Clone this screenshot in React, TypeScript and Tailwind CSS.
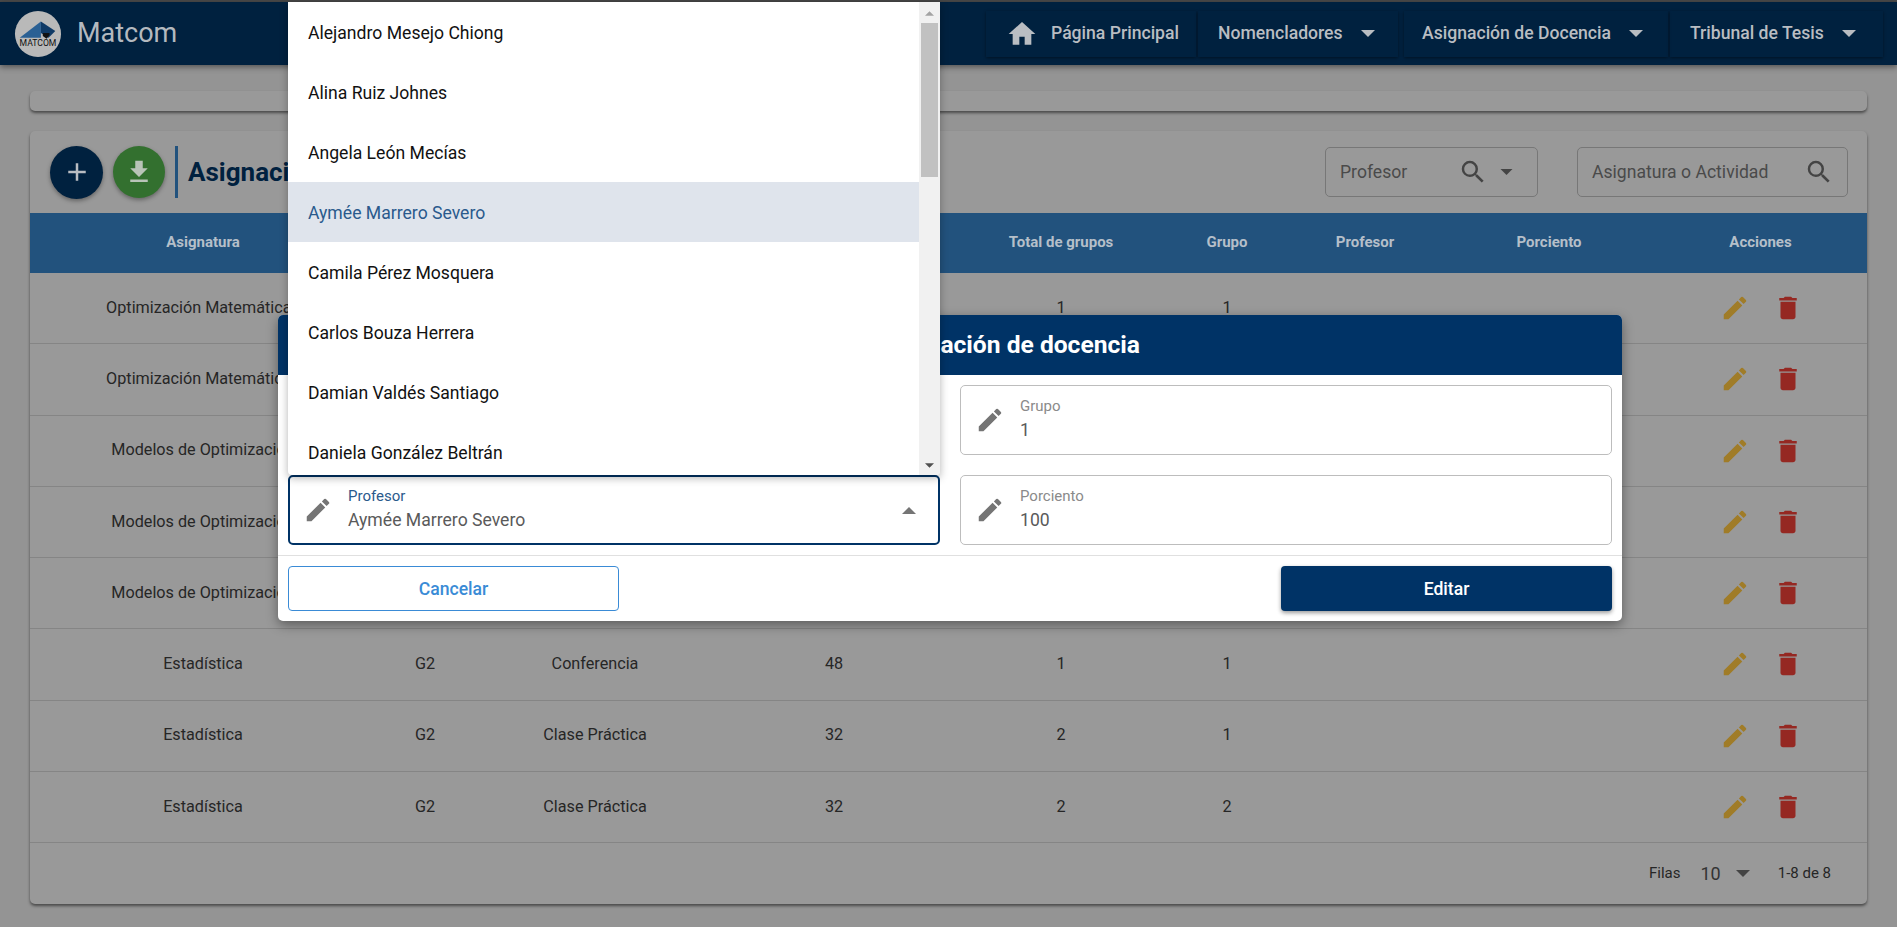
import { MdAdd, MdDelete, MdEdit, MdFileDownload, MdHome, MdSearch } from 'react-icons/md';

const rows = [
  ['Optimización Matemática I', 'G1', 'Conferencia', '48', '1', '1'],
  ['Optimización Matemática I', 'G1', 'Clase Práctica', '32', '1', '1'],
  ['Modelos de Optimización', 'G1', 'Conferencia', '48', '1', '1'],
  ['Modelos de Optimización', 'G1', 'Clase Práctica', '32', '2', '1'],
  ['Modelos de Optimización', 'G1', 'Clase Práctica', '32', '2', '2'],
  ['Estadística', 'G2', 'Conferencia', '48', '1', '1'],
  ['Estadística', 'G2', 'Clase Práctica', '32', '2', '1'],
  ['Estadística', 'G2', 'Clase Práctica', '32', '2', '2'],
];

const headers = ['Asignatura', 'Año', 'Actividad', 'Horas', 'Total de grupos', 'Grupo', 'Profesor', 'Porciento', 'Acciones'];

const professors = [
  'Alejandro Mesejo Chiong',
  'Alina Ruiz Johnes',
  'Angela León Mecías',
  'Aymée Marrero Severo',
  'Camila Pérez Mosquera',
  'Carlos Bouza Herrera',
  'Damian Valdés Santiago',
  'Daniela González Beltrán',
];

const gridCols = 'grid grid-cols-[346px_98px_242px_236px_218px_114px_162px_206px_217px]';

function Caret({ up = false, className = '' }: { up?: boolean; className?: string }) {
  return (
    <svg viewBox="0 0 10 5" className={className} fill="currentColor">
      <path d={up ? 'M0 5L5 0L10 5Z' : 'M0 0L5 5L10 0Z'} />
    </svg>
  );
}

function Logo() {
  return (
    <svg viewBox="0 0 50 50" className="w-[48px] h-[48px] shrink-0">
      <circle cx="25" cy="25" r="24" fill="#b9b9b9" />
      <path d="M6 29L28 12L28 29Z" fill="#2a6094" />
      <path d="M28 12L43 22L36 29L28 24Z" fill="#0f3a66" />
      <path d="M30 24L37 24L37 26L34 30L30 27Z" fill="#111" />
      <text x="25" y="38" textAnchor="middle" fontSize="9" fontFamily="Roboto, sans-serif" fill="#111">MATCOM</text>
    </svg>
  );
}

function Field({ label, value, focused = false }: { label: string; value: string; focused?: boolean }) {
  return (
    <div className={focused ? 'h-[70px] flex items-center rounded-[5px] border-2 border-[#003366]' : 'h-[70px] flex items-center rounded-[5px] border border-[#bdbdbd]'}>
      <MdEdit className={focused ? 'w-[30px] h-[30px] ml-[13px] text-[#757575] shrink-0' : 'w-[30px] h-[30px] ml-[14px] text-[#757575] shrink-0'} />
      <div className="ml-[15px] flex-1">
        <div className={focused ? 'text-[15px] leading-[18px] text-[#2a5a8c]' : 'text-[15px] leading-[18px] text-[#8a8a8a]'}>{label}</div>
        <div className="text-[17.6px] leading-[26px] mt-[2px] text-[#5a5a5a]">{value}</div>
      </div>
      {focused && <Caret up className="w-[14px] h-[7px] mr-[22px] text-[#757575]" />}
    </div>
  );
}

export default function App() {
  return (
    <div className="relative h-[927px] overflow-hidden bg-[#949494] text-[#262626] font-['Roboto',sans-serif]">
      <div className="h-[2px] bg-[#4a4a4a]" />

      <header className="h-[63px] bg-[#00213f] flex items-center pl-[14px] pr-[14px] shadow-[0_2px_6px_rgba(0,0,0,0.45)]">
        <Logo />
        <span className="ml-[15px] text-[27px] text-[#b4b9bf]">Matcom</span>
        <nav className="ml-auto flex items-center text-[17.6px] font-medium text-[#b9bdc2]">
          <div className="w-[210px] h-[46px] flex items-center pl-[20px] shadow-[0_1px_3px_rgba(0,0,0,0.45)]">
            <MdHome className="w-[32px] h-[32px]" />
            <span className="ml-[13px]">Página Principal</span>
          </div>
          <div className="ml-[2px] w-[200px] h-[46px] flex items-center pl-[20px] shadow-[0_1px_3px_rgba(0,0,0,0.45)]">
            <span>Nomencladores</span>
            <Caret className="w-[14px] h-[7px] ml-[18px]" />
          </div>
          <div className="ml-[6px] w-[264px] h-[46px] flex items-center pl-[18px] shadow-[0_1px_3px_rgba(0,0,0,0.45)]">
            <span>Asignación de Docencia</span>
            <Caret className="w-[14px] h-[7px] ml-[18px]" />
          </div>
          <div className="ml-[2px] w-[213px] h-[46px] flex items-center pl-[20px] shadow-[0_1px_3px_rgba(0,0,0,0.45)]">
            <span>Tribunal de Tesis</span>
            <Caret className="w-[14px] h-[7px] ml-[18px]" />
          </div>
        </nav>
      </header>

      <main className="px-[30px] pt-[26px]">
        <div className="h-[20px] rounded-[5px] bg-[#999999] shadow-[0_2px_3px_rgba(0,0,0,0.5)]" />

        <section className="mt-[20px] h-[773px] rounded-[5px] bg-[#999999] shadow-[0_2px_3px_rgba(0,0,0,0.5)] overflow-hidden">
          <div className="h-[82px] flex items-center pl-[20px] pr-[19px]">
            <button className="w-[53px] h-[53px] rounded-full bg-[#00213f] flex items-center justify-center shadow-[0_2px_4px_rgba(0,0,0,0.35)]">
              <MdAdd className="w-[30px] h-[30px] text-[#b9bdc2]" />
            </button>
            <button className="ml-[10px] w-[52px] h-[52px] rounded-full bg-[#33702f] flex items-center justify-center shadow-[0_2px_4px_rgba(0,0,0,0.35)]">
              <MdFileDownload className="w-[30px] h-[30px] text-[#b9c4b8]" />
            </button>
            <div className="ml-[10px] w-[3px] h-[52px] bg-[#22527d]" />
            <h1 className="ml-[10px] text-[26px] font-bold text-[#00213f]">Asignación de Docencia</h1>
            <div className="ml-auto w-[213px] h-[50px] rounded-[5px] border border-[#777777] flex items-center pl-[14px] text-[17.6px] text-[#4a4a4a]">
              <span className="w-[66px]">Profesor</span>
              <MdSearch className="ml-[52px] w-[30px] h-[30px] text-[#444444]" />
              <Caret className="ml-[12px] w-[13px] h-[6px] text-[#444444]" />
            </div>
            <div className="ml-[39px] w-[271px] h-[50px] rounded-[5px] border border-[#777777] flex items-center pl-[14px] text-[17.6px] text-[#4a4a4a]">
              <span className="w-[180px] whitespace-nowrap">Asignatura o Actividad</span>
              <MdSearch className="ml-[32px] w-[30px] h-[30px] text-[#444444]" />
            </div>
          </div>

          <div className={`${gridCols} h-[60px] items-center bg-[#22527d] text-[15px] font-bold text-center text-[#b5bfc9]`}>
            {headers.map((h) => (
              <div key={h} className="-mt-[2px]">{h}</div>
            ))}
          </div>

          {rows.map((row, i) => (
            <div key={i} className={`${gridCols} h-[71.25px] items-center border-b border-[#858585] text-[16.2px] text-center`}>
              {row.map((cell, j) => (
                <div key={j} className="whitespace-nowrap">{cell}</div>
              ))}
              <div />
              <div />
              <div className="flex items-center justify-center gap-[23px] pl-[1px]">
                <MdEdit className="w-[30px] h-[30px] text-[#a07c28]" />
                <MdDelete className="w-[30px] h-[30px] text-[#952822]" />
              </div>
            </div>
          ))}

          <div className="h-[59px] flex items-center justify-end pr-[36px] pt-[2px] text-[15px]">
            <span>Filas</span>
            <span className="ml-[20px] text-[18px] text-[#333333]">10</span>
            <Caret className="ml-[15px] w-[14px] h-[7px] text-[#444444]" />
            <span className="ml-[28px]">1-8 de 8</span>
          </div>
        </section>
      </main>

      {/* modal */}
      <div className="absolute left-[278px] top-[315px] w-[1344px] h-[306px] rounded-[5px] bg-white shadow-[0_4px_12px_rgba(0,0,0,0.4)] overflow-hidden">
        <div className="h-[60px] bg-[#003366] flex items-center justify-end pr-[482px] text-[24.6px] font-bold text-white">
          Editar asignación de docencia
        </div>
        <div className="grid grid-cols-2 gap-x-[20px] gap-y-[20px] px-[10px] pt-[10px] pb-[10px] border-b border-[#e0e0e0]">
          <Field label="Asignatura" value="Optimización Matemática I" />
          <Field label="Grupo" value="1" />
          <Field label="Profesor" value="Aymée Marrero Severo" focused />
          <Field label="Porciento" value="100" />
        </div>
        <div className="flex justify-between px-[10px] pt-[10px]">
          <button className="w-[331px] h-[45px] pt-[1px] rounded-[4px] border border-[#3a8bd6] text-[17.6px] font-medium text-[#3a8bd6]">Cancelar</button>
          <button className="w-[331px] h-[45px] pt-[1px] rounded-[4px] bg-[#003366] text-[17.6px] font-medium text-white shadow-[0_2px_4px_rgba(0,0,0,0.4)]">Editar</button>
        </div>
      </div>

      {/* select dropdown */}
      <div className="absolute left-[288px] top-[2px] w-[652px] h-[473px] flex rounded-b-[4px] bg-white shadow-[0_3px_8px_rgba(0,0,0,0.3)] overflow-hidden">
        <ul className="flex-1">
          {professors.map((name) => (
            <li
              key={name}
              className={name === 'Aymée Marrero Severo'
                ? 'h-[60px] flex items-center pl-[20px] pt-[3px] text-[17.6px] bg-[#dfe4ec] text-[#2a5a8c]'
                : 'h-[60px] flex items-center pl-[20px] pt-[3px] text-[17.6px] text-[#111111]'}
            >
              {name}
            </li>
          ))}
        </ul>
        <div className="w-[21px] bg-[#f1f1f1] flex flex-col items-center">
          <Caret up className="mt-[9px] w-[9px] h-[5px] text-[#a3a3a3]" />
          <div className="mt-[7px] w-[17px] h-[154px] bg-[#c1c1c1]" />
          <Caret className="mt-auto mb-[7px] w-[9px] h-[5px] text-[#505050]" />
        </div>
      </div>
    </div>
  );
}
